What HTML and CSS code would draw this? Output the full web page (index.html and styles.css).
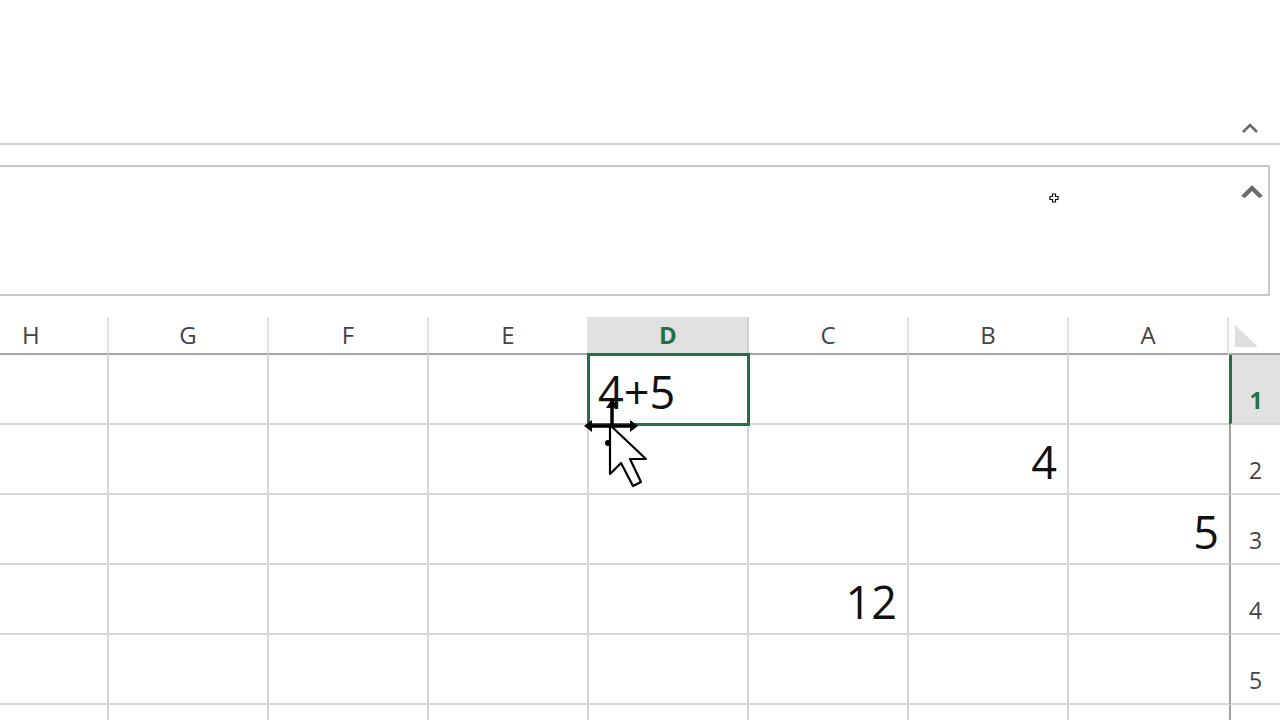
FILE: index.html
```html
<!DOCTYPE html>
<html>
<head>
<meta charset="utf-8">
<link rel="stylesheet" href="styles.css">
</head>
<body>
<div class="top">
  <svg class="chev-thin" width="18" height="12" viewBox="0 0 18 12"><path d="M2 10 L9 3 L16 10" fill="none" stroke="#6a6a6a" stroke-width="2.6"/></svg>
</div>
<div class="fbar-wrap">
  <div class="fbar">
    <svg class="chev-bold" width="24" height="18" viewBox="0 0 24 18"><path d="M1 14 L12 3 L23 14 L19 16 L12 9 L5 16 Z" fill="#6a6a6a"/></svg>
    <svg class="tiny-cross" width="10" height="10" viewBox="0 0 10 10"><path d="M3.5 1 H6.5 V3.5 H9 V6.5 H6.5 V9 H3.5 V6.5 H1 V3.5 H3.5 Z" fill="#fff" stroke="#111" stroke-width="1.2"/></svg>
  </div>
</div>
<div class="sheet">
  <div class="hd">H</div>
  <div class="hd">G</div>
  <div class="hd">F</div>
  <div class="hd">E</div>
  <div class="hd hd-sel">D</div>
  <div class="hd">C</div>
  <div class="hd">B</div>
  <div class="hd">A</div>
  <div class="hd corner"><span class="tri"></span></div>

  <div class="c"></div><div class="c"></div><div class="c"></div><div class="c"></div>
  <div class="c sel left">4+5</div>
  <div class="c"></div><div class="c"></div><div class="c"></div>
  <div class="rh rh-sel">1</div>

  <div class="c"></div><div class="c"></div><div class="c"></div><div class="c"></div>
  <div class="c"></div><div class="c"></div><div class="c">4</div><div class="c"></div>
  <div class="rh">2</div>

  <div class="c"></div><div class="c"></div><div class="c"></div><div class="c"></div>
  <div class="c"></div><div class="c"></div><div class="c"></div><div class="c">5</div>
  <div class="rh">3</div>

  <div class="c"></div><div class="c"></div><div class="c"></div><div class="c"></div>
  <div class="c"></div><div class="c">12</div><div class="c"></div><div class="c"></div>
  <div class="rh">4</div>

  <div class="c"></div><div class="c"></div><div class="c"></div><div class="c"></div>
  <div class="c"></div><div class="c"></div><div class="c"></div><div class="c"></div>
  <div class="rh">5</div>

  <div class="c"></div><div class="c"></div><div class="c"></div><div class="c"></div>
  <div class="c"></div><div class="c"></div><div class="c"></div><div class="c"></div>
  <div class="rh"></div>

  <svg class="cursor" width="70" height="95" viewBox="0 0 70 95">
    <path d="M32 6 V31" stroke="#000" stroke-width="3.5"/>
    <path d="M26 13 L32 4 L38 13 Z" fill="#000"/>
    <path d="M9 31 H52" stroke="#000" stroke-width="3.5"/>
    <path d="M4 31 L12 25 L12 37 Z" fill="#000"/>
    <path d="M58 31 L50 25 L50 37 Z" fill="#000"/>
    <path d="M30 30 L30 79 L41 68 L53 91 L61 87 L50 64 L66 64 Z" fill="#fff" stroke="#000" stroke-width="2.2" stroke-linejoin="round"/>
    <circle cx="28" cy="48" r="3" fill="#000"/>
  </svg>
</div>
</body>
</html>
```

FILE: styles.css
```css
html, body {
  margin: 0;
  padding: 0;
}
body {
  width: 1280px;
  height: 720px;
  overflow: hidden;
  background: #fff;
  font-family: "Open Sans", "Noto Sans", sans-serif;
  color: #222;
}
.top {
  height: 145px;
  border-bottom: 2px solid #d0d0d0;
  display: flex;
  justify-content: flex-end;
  align-items: flex-end;
  padding-right: 21px;
  box-sizing: border-box;
}
.chev-thin {
  margin-bottom: 9px;
}
.fbar-wrap {
  padding: 20px 10px 0 0;
}
.fbar {
  position: relative;
  height: 131px;
  box-sizing: border-box;
  border: 2px solid #c8c8c8;
  border-left: none;
  display: flex;
  justify-content: flex-end;
  align-items: flex-start;
  padding: 15px 4px 0 0;
}
.tiny-cross {
  position: absolute;
  left: 1049px;
  top: 26px;
}
.sheet {
  position: relative;
  margin-top: 21px;
  display: grid;
  grid-template-columns: 109px repeat(7, 160px) 51px;
  grid-template-rows: 38px repeat(6, 70px);
}
.hd {
  box-sizing: border-box;
  border-right: 2px solid #e2e2e2;
  border-bottom: 2px solid #a6a6a6;
  display: flex;
  align-items: center;
  justify-content: center;
  font-size: 24px;
  color: #444;
  line-height: 1;
  padding-bottom: 0;
}
.hd:first-child {
  justify-content: flex-start;
  padding-left: 22px;
}
.hd-sel {
  background: #e1e1e1;
  color: #217346;
  font-weight: 700;
  border-right-color: #d0d0d0;
}
.corner {
  border-right: none;
  align-items: flex-end;
  justify-content: flex-start;
  padding: 0 0 6px 6px;
}
.tri {
  width: 0;
  height: 0;
  border-bottom: 22px solid #dedede;
  border-right: 23px solid transparent;
}
.c {
  box-sizing: border-box;
  border-right: 2px solid #d6d6d6;
  border-bottom: 2px solid #d6d6d6;
  display: flex;
  align-items: flex-end;
  justify-content: flex-end;
  padding: 0 10px 9px 9px;
  font-size: 45px;
  line-height: 1;
  color: #111;
}
.c:nth-child(9n+8) {
  border-right: none;
}
.c.left {
  justify-content: flex-start;
}
.sel {
  position: relative;
}
.sel::after {
  content: "";
  position: absolute;
  left: -2px;
  top: -2px;
  right: -3px;
  bottom: -3px;
  border: 3px solid #217346;
}
.rh {
  box-sizing: border-box;
  border-left: 2px solid #a0a0a0;
  border-bottom: 2px solid #d6d6d6;
  display: flex;
  align-items: flex-end;
  justify-content: center;
  font-size: 23px;
  line-height: 1;
  color: #444;
  padding-bottom: 11px;
}
.rh-sel {
  background: #e1e1e1;
  border-left: 3px solid #217346;
  color: #217346;
  font-weight: 700;
}
.cursor {
  position: absolute;
  left: 580px;
  top: 78px;
}
```
